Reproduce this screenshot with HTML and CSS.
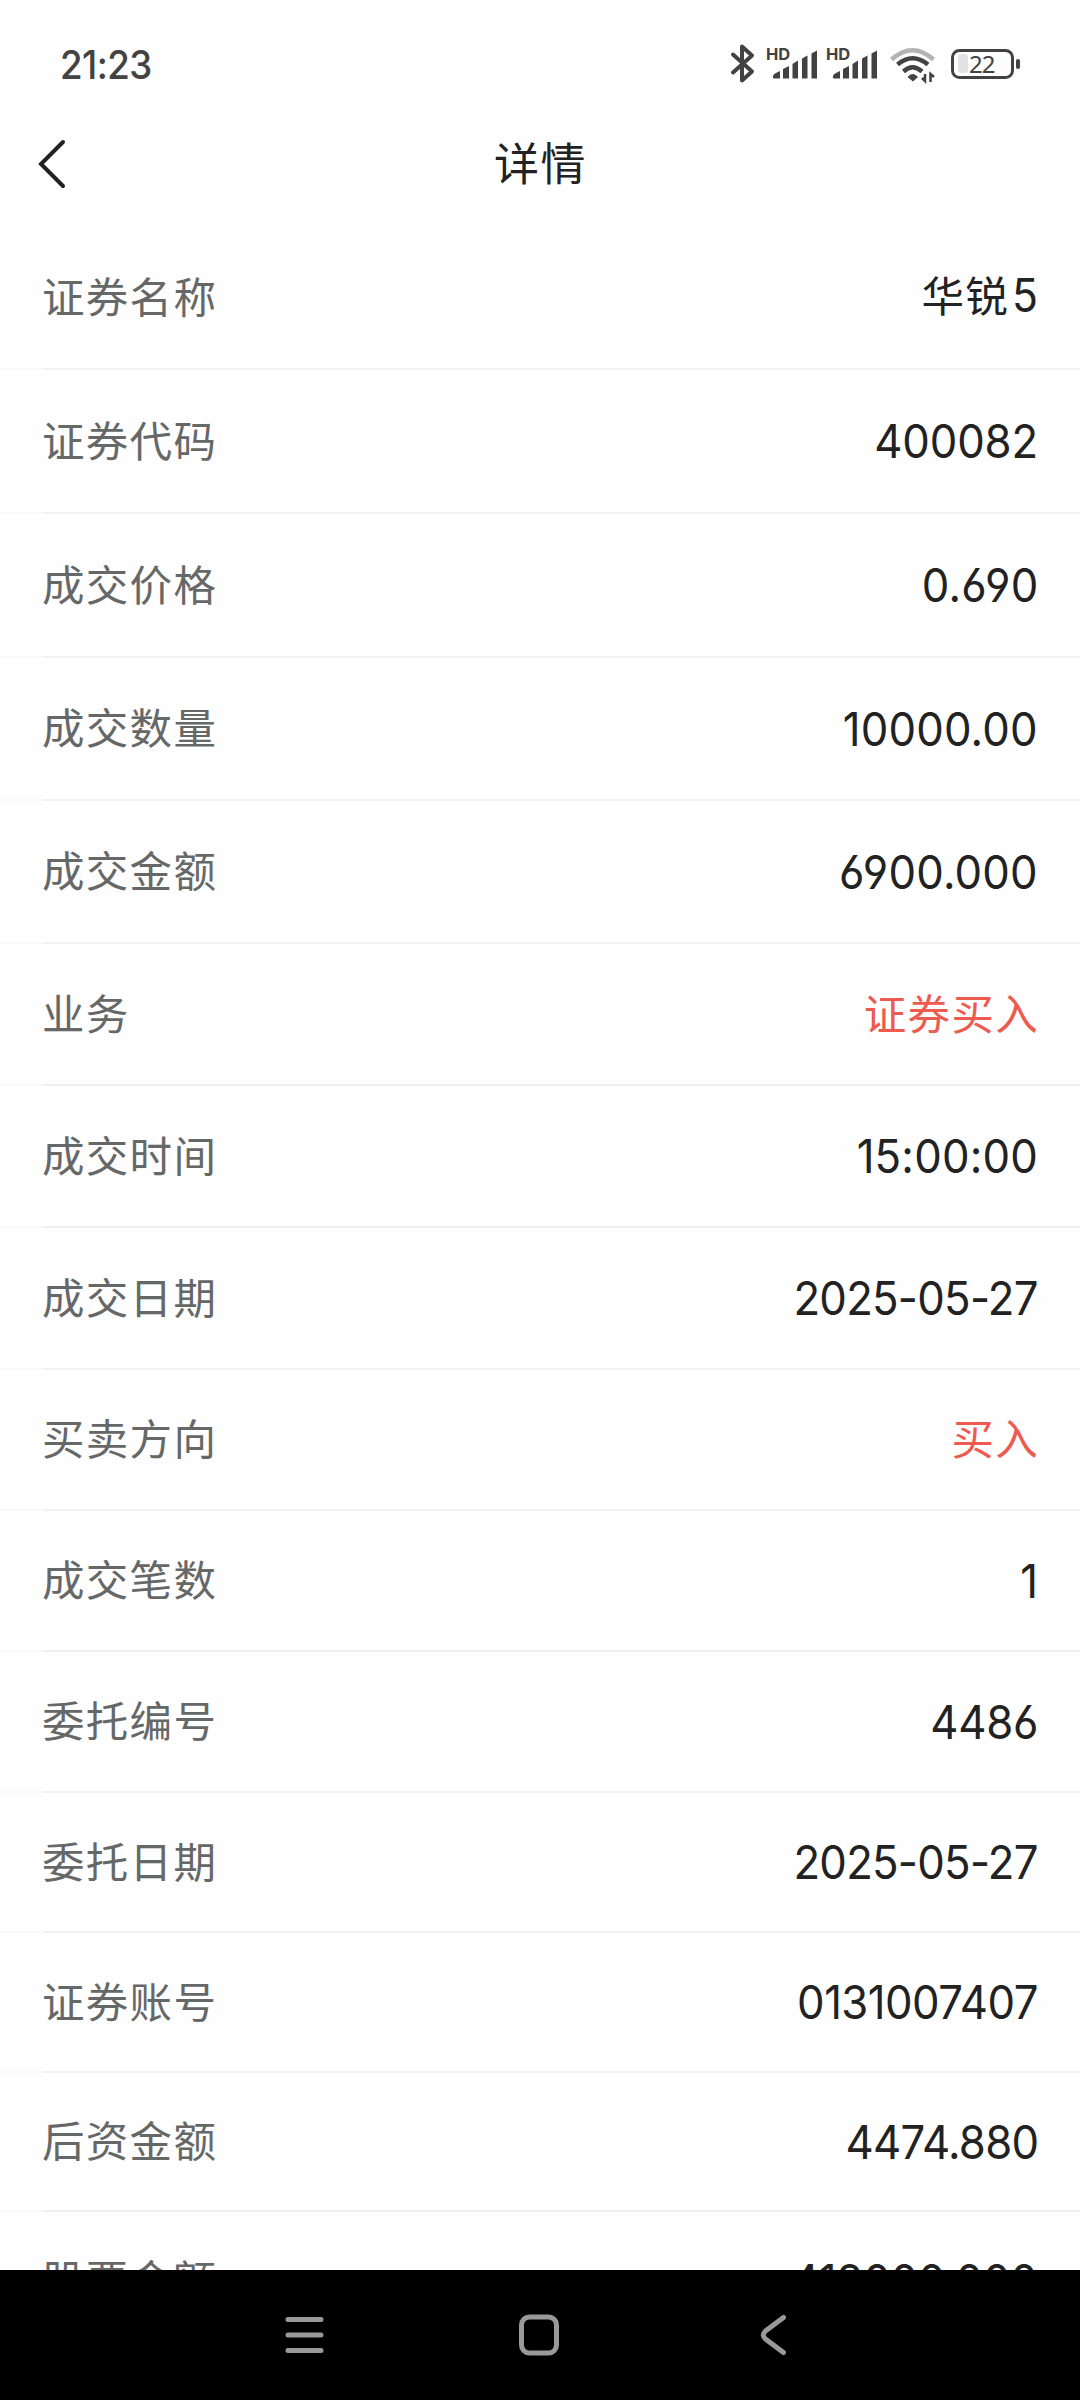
FILE: index.html
```html
<!DOCTYPE html>
<html lang="zh-CN">
<head>
<meta charset="utf-8">
<title>详情</title>
<link rel="stylesheet" href="styles.css">
</head>
<body>
<div class="screen">
  <header class="status">
    <span class="clock">21:23</span>
    <svg class="status-icons" width="300" height="50" viewBox="0 0 300 50" fill="none">
      <path d="M3 14.500L22 31.500L12 40.500V6.500L22 15.500L3 32.500" stroke="#424242" stroke-width="4" stroke-linejoin="round" stroke-linecap="round"/>
      <g fill="#424242">
        <text class="hd" x="36" y="20">HD</text>
        <path id="bars" d="M43 38V36Q43 34 50 31V38.500H44ZM53 38.500V29L59 26V38.500ZM62.500 38.500V24L68 20.500V38.500ZM72 38.500V18.500L77.500 15.500V38.500ZM81.500 38.500V13.500L87 10.500V38.500Z"/>
        <text class="hd" x="96" y="20">HD</text>
        <use href="#bars" x="60"/>
      </g>
      <path d="M161.500 19.500Q182.500 1 203.500 19.500" stroke="#b3b3b3" stroke-width="4.500"/>
      <path d="M167.500 24.500Q182.500 12 198 24.500M173.500 31.500Q182.500 23 192 31.500" stroke="#424242" stroke-width="4.500"/>
      <path d="M178 37Q182.500 32 187.500 37L183 41Z" fill="#424242" stroke="#424242"/>
      <path d="M195 34V41L192 38M200.500 42V34L204 37" stroke="#424242" stroke-width="2.500"/>
      <rect x="222.500" y="10.500" width="60" height="27" rx="7" stroke="#424242" stroke-width="3"/>
      <rect x="228" y="14" width="10" height="19" rx="3" fill="#e2e2e2"/>
      <text class="charge" x="239" y="33" fill="#424242">22</text>
      <rect x="286" y="19" width="4" height="10" rx="2" fill="#424242"/>
    </svg>
  </header>
  <nav class="title-bar">
    <svg class="back" width="32" height="52" viewBox="0 0 32 52" fill="none"><path d="M26 4L4 26L26 48" stroke="#222" stroke-width="4" stroke-linecap="round"/></svg>
    <h1 class="title">详情</h1>
  </nav>
  <main class="list">
    <div class="row r144"><span class="label">证券名称</span><span class="value zh">华锐<span class="five">5</span></span></div>
    <div class="row r144"><span class="label">证券代码</span><span class="value num">400082</span></div>
    <div class="row r144"><span class="label">成交价格</span><span class="value num wide">0.690</span></div>
    <div class="row r143"><span class="label">成交数量</span><span class="value num wide">10000.00</span></div>
    <div class="row r143"><span class="label">成交金额</span><span class="value num wide">6900.000</span></div>
    <div class="row r142"><span class="label">业务</span><span class="value zh buy">证券买入</span></div>
    <div class="row r142"><span class="label">成交时间</span><span class="value num wide">15:00:00</span></div>
    <div class="row r142"><span class="label">成交日期</span><span class="value num tight">2025-05-27</span></div>
    <div class="row r141"><span class="label">买卖方向</span><span class="value zh buy">买入</span></div>
    <div class="row r141"><span class="label">成交笔数</span><span class="value num">1</span></div>
    <div class="row r141"><span class="label">委托编号</span><span class="value num">4486</span></div>
    <div class="row r140"><span class="label">委托日期</span><span class="value num tight">2025-05-27</span></div>
    <div class="row r140"><span class="label">证券账号</span><span class="value num account">0131007407</span></div>
    <div class="row r139"><span class="label">后资金额</span><span class="value num tight">4474.880</span></div>
    <div class="row r139"><span class="label">股票金额</span><span class="value num">418000.000</span></div>
  </main>
  <footer class="system-nav">
    <svg width="1080" height="130" viewBox="0 0 1080 130" fill="none" stroke="#999" stroke-width="5" stroke-linecap="round">
      <path d="M288 49.500H321M288 65H321M288 80.500H321"/>
      <rect x="521.500" y="47" width="35" height="36" rx="8"/>
      <path d="M783.500 47.500L765.500 61Q761 65 765.500 69L783.500 82.500"/>
    </svg>
  </footer>
</div>
</body>
</html>
```
FILE: styles.css
```css
* { box-sizing: border-box; }
body { margin: 0; background: #fefefe; }
.screen { width: 1080px; height: 2400px; display: flex; flex-direction: column; overflow: hidden; font-family: "Inter", "Noto Sans CJK SC", sans-serif; color: #222; background: #fefefe; }
.status { height: 120px; flex: none; display: flex; justify-content: space-between; align-items: flex-start; padding: 40px 50px 0 60px; }
.clock { font-size: 39px; line-height: 50px; font-weight: 500; letter-spacing: -0.6px; color: #424242; transform: scaleX(.94); transform-origin: left; }
.status-icons { display: block; }
.hd { font: 700 16.500px "Inter", sans-serif; }
.charge { font: 400 24px "Noto Sans", sans-serif; letter-spacing: -1px; }
.title-bar { height: 106px; flex: none; display: flex; align-items: flex-start; padding: 18px 0 0 37px; }
.back { flex: none; margin-right: 425px; }
.title { margin: -6px 0 0; font: 400 45px/60px "Noto Sans CJK SC", sans-serif; letter-spacing: 1.5px; white-space: nowrap; }
.list { flex: 1; min-height: 0; overflow: hidden; }
.row { display: flex; align-items: center; justify-content: space-between; padding: 0 42px; border-bottom: 2px solid #f2f2f2; border-image: linear-gradient(90deg, #f9f9f9 44px, #f1f1f1 44px) 1; }
.r144 { height: 144px; }
.r143 { height: 143px; }
.r142 { height: 142px; }
.r141 { height: 141px; }
.r140 { height: 140px; }
.r139 { height: 139px; }
.label, .value.zh { font: 400 42.500px/60px "Noto Sans CJK SC", sans-serif; letter-spacing: 1.3px; padding-bottom: 5px; }
.label { color: #666868; }
.value.zh { margin-right: -1px; }
.num { font-size: 47px; font-weight: 370; line-height: 60px; letter-spacing: -0.2px; font-feature-settings: "cv03", "cv04"; transform: scaleX(.93); transform-origin: right; }
.wide { letter-spacing: 0.2px; }
.tight { letter-spacing: -0.8px; }
.account { letter-spacing: -0.6px; }
.five { display: inline-block; font-family: "Inter", sans-serif; font-size: 46px; margin-left: 2px; letter-spacing: 0; transform: scaleX(.93); }
.buy { color: #ec5a50; }
.system-nav { height: 130px; flex: none; background: #000; }
.system-nav svg { display: block; }
```
